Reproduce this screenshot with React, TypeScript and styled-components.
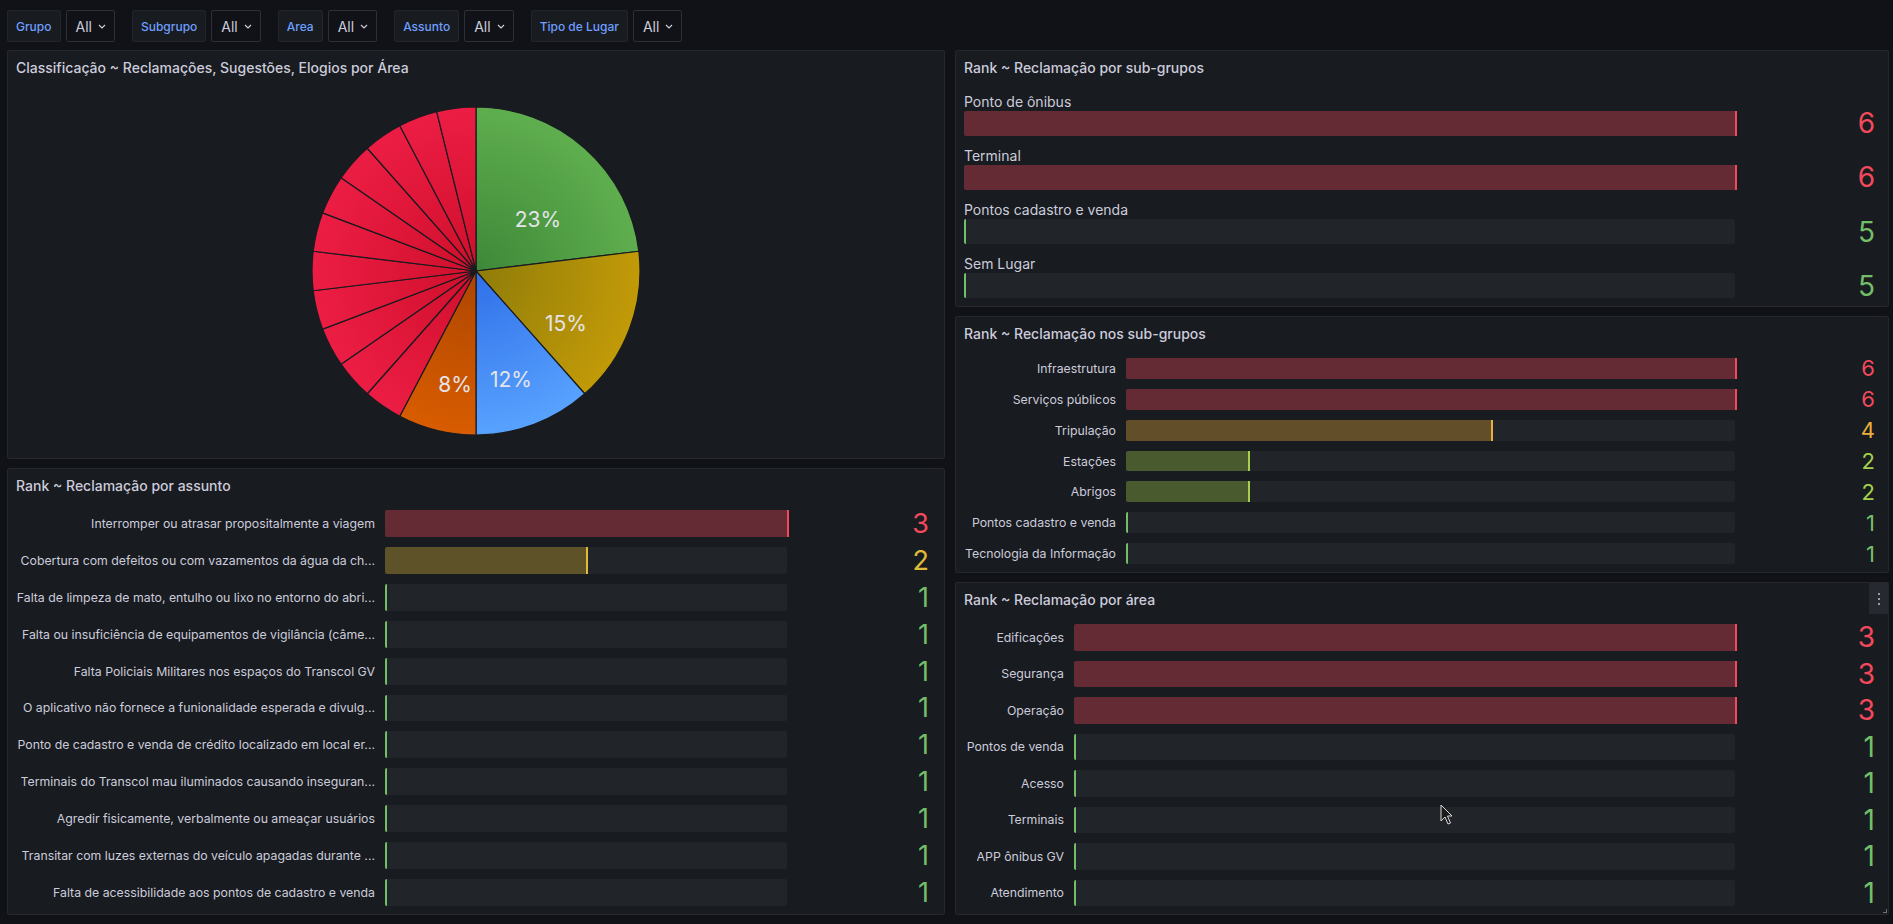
import React from "react";
import styled, { createGlobalStyle } from "styled-components";

const GlobalStyle = createGlobalStyle`
  html, body { margin: 0; padding: 0; background: #111217; }
  body { font-family: Inter, "Noto Sans", "Liberation Sans", sans-serif; color: #ccccdc; }
  * { box-sizing: border-box; }
`;

const PANEL_BG = "#181b1f";

function blend(hex: string, alpha: number, base: string = PANEL_BG): string {
  const p = (h: string) => [1, 3, 5].map((i) => parseInt(h.slice(i, i + 2), 16));
  const a = p(hex);
  const b = p(base);
  const c = a.map((v, i) => Math.round(v * alpha + b[i] * (1 - alpha)));
  return `rgb(${c[0]}, ${c[1]}, ${c[2]})`;
}

const RED = "#F2495C";
const GREEN = "#73BF69";
const ORANGE_YELLOW = "#EAAE3C";
const YELLOW = "#E0BB39";
const LIME = "#A7CF4D";

const Page = styled.div`
  width: 1893px;
  height: 924px;
  padding: 10px 4px 9px 7px;
  display: flex;
  flex-direction: column;
  gap: 8px;
  overflow: hidden;
`;

const FilterBar = styled.div`
  display: flex;
  gap: 17px;
  height: 32px;
  flex: none;
`;

const FilterGroup = styled.div`
  display: flex;
  gap: 5px;
`;

const FilterLabel = styled.div`
  display: flex;
  align-items: center;
  padding: 0 8px;
  background: #181b1f;
  border: 1px solid #22252b;
  border-radius: 2px;
  color: #6e9fff;
  font-size: 12px;
  font-weight: 500;
  white-space: nowrap;
`;

const FilterSelect = styled.div`
  display: flex;
  align-items: center;
  gap: 6px;
  padding: 0 8px 0 9px;
  background: #111217;
  border: 1px solid #2c2f35;
  border-radius: 2px;
  color: #ccccdc;
  font-size: 14px;
`;

const Dashboard = styled.div`
  flex: 1;
  min-height: 0;
  display: grid;
  grid-template-columns: 938px 1fr;
  column-gap: 10px;
`;

const Column = styled.div`
  display: flex;
  flex-direction: column;
  gap: 9px;
  min-height: 0;
`;

const Panel = styled.section<{ $h?: number }>`
  position: relative;
  background: ${PANEL_BG};
  border: 1px solid #24272d;
  border-radius: 2px;
  display: flex;
  flex-direction: column;
  min-height: 0;
  ${(p) => (p.$h ? `height: ${p.$h}px; flex: none;` : `flex: 1;`)}
`;

const PanelHeader = styled.header`
  height: 32px;
  flex: none;
  padding: 0 8px;
  display: flex;
  align-items: center;
  font-size: 14px;
  font-weight: 500;
  color: #ccccdc;
  white-space: nowrap;
`;

const PieBody = styled.div`
  flex: 1;
  min-height: 0;
  display: flex;
  align-items: center;
  justify-content: center;
`;

const BarList = styled.div<{ $pr: number; $gap: number }>`
  flex: 1;
  min-height: 0;
  display: flex;
  flex-direction: column;
  gap: ${(p) => p.$gap}px;
  padding: 9px ${(p) => p.$pr}px 8px 8px;
`;

const HRow = styled.div`
  flex: 1;
  min-height: 0;
  display: flex;
`;

const HLabel = styled.div<{ $w: number }>`
  flex: none;
  width: ${(p) => p.$w}px;
  padding-right: 10px;
  display: flex;
  align-items: center;
  justify-content: flex-end;
  font-size: 12.3px;
  color: #ccccdc;
  overflow: hidden;
`;

const LabelText = styled.span`
  display: block;
  max-width: 100%;
  white-space: nowrap;
  overflow: hidden;
  text-overflow: ellipsis;
`;

const VRow = styled.div`
  flex: 1;
  min-height: 0;
  display: flex;
  flex-direction: column;
`;

const VLabel = styled.div`
  flex: none;
  height: 19px;
  line-height: 19px;
  font-size: 14px;
  color: #ccccdc;
  white-space: nowrap;
`;

const VBar = styled.div`
  flex: 1;
  min-height: 0;
  display: flex;
`;

const Track = styled.div`
  flex: 1;
  min-width: 0;
  display: flex;
  background: #212429;
  border-radius: 2px;
`;

const Fill = styled.div<{ $c: string }>`
  flex: none;
  box-sizing: content-box;
  height: 100%;
  background: ${(p) => blend(p.$c, 0.35)};
  border-right: 2px solid ${(p) => p.$c};
  border-radius: 2px 0 0 2px;
`;

const Value = styled.div<{ $c: string; $fs: number; $w: number }>`
  flex: none;
  width: ${(p) => p.$w}px;
  display: flex;
  align-items: center;
  justify-content: flex-end;
  color: ${(p) => p.$c};
  font-size: ${(p) => p.$fs}px;
  line-height: 1;
`;

const MenuButton = styled.div`
  position: absolute;
  top: 0;
  right: 0;
  width: 19px;
  height: 31px;
  background: #26292f;
  display: flex;
  flex-direction: column;
  align-items: center;
  justify-content: center;
  gap: 3px;
`;

const Dot = styled.span`
  width: 2px;
  height: 2px;
  background: #9a9ca2;
`;

const ResizeHandle = styled.div`
  position: absolute;
  right: 1px;
  bottom: 1px;
  width: 4px;
  height: 4px;
  border-right: 1px solid #6c6f75;
  border-bottom: 1px solid #6c6f75;
`;

const Cursor = styled.svg`
  position: absolute;
  left: 484px;
  top: 221px;
`;

type Row = { label: string; value: number; color: string };

function pct(v: number, min: number, max: number) {
  return Math.max(0, Math.min(1, (v - min) / (max - min))) * 100;
}

function HBarGauge(props: {
  rows: Row[];
  min: number;
  max: number;
  labelW: number;
  valueW: number;
  fs: number;
  pr: number;
}) {
  const { rows, min, max, labelW, valueW, fs, pr } = props;
  return (
    <BarList $pr={pr} $gap={10}>
      {rows.map((r, i) => (
        <HRow key={i}>
          <HLabel $w={labelW}>
            <LabelText>{r.label}</LabelText>
          </HLabel>
          <Track>
            <Fill $c={r.color} style={{ width: `${pct(r.value, min, max)}%` }} />
          </Track>
          <Value $c={r.color} $fs={fs} $w={valueW}>
            {r.value}
          </Value>
        </HRow>
      ))}
    </BarList>
  );
}

function VBarGauge(props: { rows: Row[]; min: number; max: number }) {
  const { rows, min, max } = props;
  return (
    <BarList $pr={13} $gap={10.5}>
      {rows.map((r, i) => (
        <VRow key={i}>
          <VLabel>{r.label}</VLabel>
          <VBar>
            <Track>
              <Fill $c={r.color} style={{ width: `${pct(r.value, min, max)}%` }} />
            </Track>
            <Value $c={r.color} $fs={28} $w={140}>
              {r.value}
            </Value>
          </VBar>
        </VRow>
      ))}
    </BarList>
  );
}

const Chevron = () => (
  <svg width="8" height="5" viewBox="0 0 8 5">
    <path d="M1 1l3 3 3-3" fill="none" stroke="#ccccdc" strokeWidth="1.2" />
  </svg>
);

const filters = ["Grupo", "Subgrupo", "Area", "Assunto", "Tipo de Lugar"];

type Slice = { v: number; g: string };
const gradients: Record<string, [string, string]> = {
  green: ["#3d8838", "#5fae4e"],
  yellow: ["#8f7c09", "#c29a08"],
  blue: ["#2f6fe8", "#58a2ff"],
  orange: ["#ad4600", "#d85c00"],
  red: ["#cf0f2b", "#ec1d44"],
};

const slices: Slice[] = [
  { v: 6, g: "green" },
  { v: 4, g: "yellow" },
  { v: 3, g: "blue" },
  { v: 2, g: "orange" },
  ...Array.from({ length: 11 }, () => ({ v: 1, g: "red" })),
];

function PieChart() {
  const size = 330;
  const c = size / 2;
  const r = 164;
  const total = slices.reduce((s, x) => s + x.v, 0);
  let a0 = 0;
  const paths = slices.map((s, i) => {
    const a1 = a0 + (s.v / total) * Math.PI * 2;
    const x0 = c + r * Math.sin(a0);
    const y0 = c - r * Math.cos(a0);
    const x1 = c + r * Math.sin(a1);
    const y1 = c - r * Math.cos(a1);
    const large = a1 - a0 > Math.PI ? 1 : 0;
    const d = `M${c} ${c} L${x0.toFixed(2)} ${y0.toFixed(2)} A${r} ${r} 0 ${large} 1 ${x1.toFixed(2)} ${y1.toFixed(2)} Z`;
    a0 = a1;
    return <path key={i} d={d} fill={`url(#pg-${s.g})`} stroke={PANEL_BG} strokeWidth={1.2} strokeLinejoin="round" />;
  });
  const labels = [
    { t: "23%", dx: 62, dy: -52 },
    { t: "15%", dx: 90, dy: 52 },
    { t: "12%", dx: 35, dy: 108 },
    { t: "8%", dx: -21, dy: 113 },
  ];
  return (
    <svg width={size} height={size} viewBox={`0 0 ${size} ${size}`}>
      <defs>
        {Object.entries(gradients).map(([k, [a, b]]) => (
          <radialGradient key={k} id={`pg-${k}`} gradientUnits="userSpaceOnUse" cx={c} cy={c} r={r}>
            <stop offset="0" stopColor={a} />
            <stop offset="1" stopColor={b} />
          </radialGradient>
        ))}
      </defs>
      {paths}
      {labels.map((l) => (
        <text
          key={l.t}
          x={c + l.dx}
          y={c + l.dy}
          textAnchor="middle"
          dominantBaseline="central"
          fontFamily="Inter, sans-serif"
          fontSize="21"
          fill="#e4e4ea"
        >
          {l.t}
        </text>
      ))}
    </svg>
  );
}

const assuntoRows: Row[] = [
  { label: "Interromper ou atrasar propositalmente a viagem", value: 3, color: RED },
  { label: "Cobertura com defeitos ou com vazamentos da água da ch...", value: 2, color: YELLOW },
  { label: "Falta de limpeza de mato, entulho ou lixo no entorno do abri...", value: 1, color: GREEN },
  { label: "Falta ou insuficiência de equipamentos de vigilância (câme...", value: 1, color: GREEN },
  { label: "Falta Policiais Militares nos espaços do Transcol GV", value: 1, color: GREEN },
  { label: "O aplicativo não fornece a funionalidade esperada e divulg...", value: 1, color: GREEN },
  { label: "Ponto de cadastro e venda de crédito localizado em local er...", value: 1, color: GREEN },
  { label: "Terminais do Transcol mau iluminados causando inseguran...", value: 1, color: GREEN },
  { label: "Agredir fisicamente, verbalmente ou ameaçar usuários", value: 1, color: GREEN },
  { label: "Transitar com luzes externas do veículo apagadas durante ...", value: 1, color: GREEN },
  { label: "Falta de acessibilidade aos pontos de cadastro e venda", value: 1, color: GREEN },
];

const subgrupoRows: Row[] = [
  { label: "Ponto de ônibus", value: 6, color: RED },
  { label: "Terminal", value: 6, color: RED },
  { label: "Pontos cadastro e venda", value: 5, color: GREEN },
  { label: "Sem Lugar", value: 5, color: GREEN },
];

const nosSubgruposRows: Row[] = [
  { label: "Infraestrutura", value: 6, color: RED },
  { label: "Serviços públicos", value: 6, color: RED },
  { label: "Tripulação", value: 4, color: ORANGE_YELLOW },
  { label: "Estações", value: 2, color: LIME },
  { label: "Abrigos", value: 2, color: LIME },
  { label: "Pontos cadastro e venda", value: 1, color: GREEN },
  { label: "Tecnologia da Informação", value: 1, color: GREEN },
];

const areaRows: Row[] = [
  { label: "Edificações", value: 3, color: RED },
  { label: "Segurança", value: 3, color: RED },
  { label: "Operação", value: 3, color: RED },
  { label: "Pontos de venda", value: 1, color: GREEN },
  { label: "Acesso", value: 1, color: GREEN },
  { label: "Terminais", value: 1, color: GREEN },
  { label: "APP ônibus GV", value: 1, color: GREEN },
  { label: "Atendimento", value: 1, color: GREEN },
];

export default function App() {
  return (
    <>
      <GlobalStyle />
      <Page>
        <FilterBar>
          {filters.map((f) => (
            <FilterGroup key={f}>
              <FilterLabel>{f}</FilterLabel>
              <FilterSelect>
                All
                <Chevron />
              </FilterSelect>
            </FilterGroup>
          ))}
        </FilterBar>
        <Dashboard>
          <Column>
            <Panel $h={409}>
              <PanelHeader>Classificação ~ Reclamações, Sugestões, Elogios por Área</PanelHeader>
              <PieBody>
                <PieChart />
              </PieBody>
            </Panel>
            <Panel>
              <PanelHeader>Rank ~ Reclamação por assunto</PanelHeader>
              <HBarGauge rows={assuntoRows} min={1} max={3} labelW={369} valueW={142} fs={27} pr={15} />
            </Panel>
          </Column>
          <Column>
            <Panel $h={257}>
              <PanelHeader>Rank ~ Reclamação por sub-grupos</PanelHeader>
              <VBarGauge rows={subgrupoRows} min={5} max={6} />
            </Panel>
            <Panel $h={257}>
              <PanelHeader>Rank ~ Reclamação nos sub-grupos</PanelHeader>
              <HBarGauge rows={nosSubgruposRows} min={1} max={6} labelW={162} valueW={140} fs={22} pr={13} />
            </Panel>
            <Panel>
              <PanelHeader>Rank ~ Reclamação por área</PanelHeader>
              <HBarGauge rows={areaRows} min={1} max={3} labelW={110} valueW={140} fs={28} pr={13} />
              <MenuButton>
                <Dot />
                <Dot />
                <Dot />
              </MenuButton>
              <ResizeHandle />
              <Cursor width="13" height="21" viewBox="0 0 13 21">
                <path d="M1 1 L1 17 L5 13 L8 20 L10.5 19 L7.5 12 L12 12 Z" fill="#1c1c1c" stroke="#d8d8d8" strokeWidth="1" strokeLinejoin="round" />
              </Cursor>
            </Panel>
          </Column>
        </Dashboard>
      </Page>
    </>
  );
}
